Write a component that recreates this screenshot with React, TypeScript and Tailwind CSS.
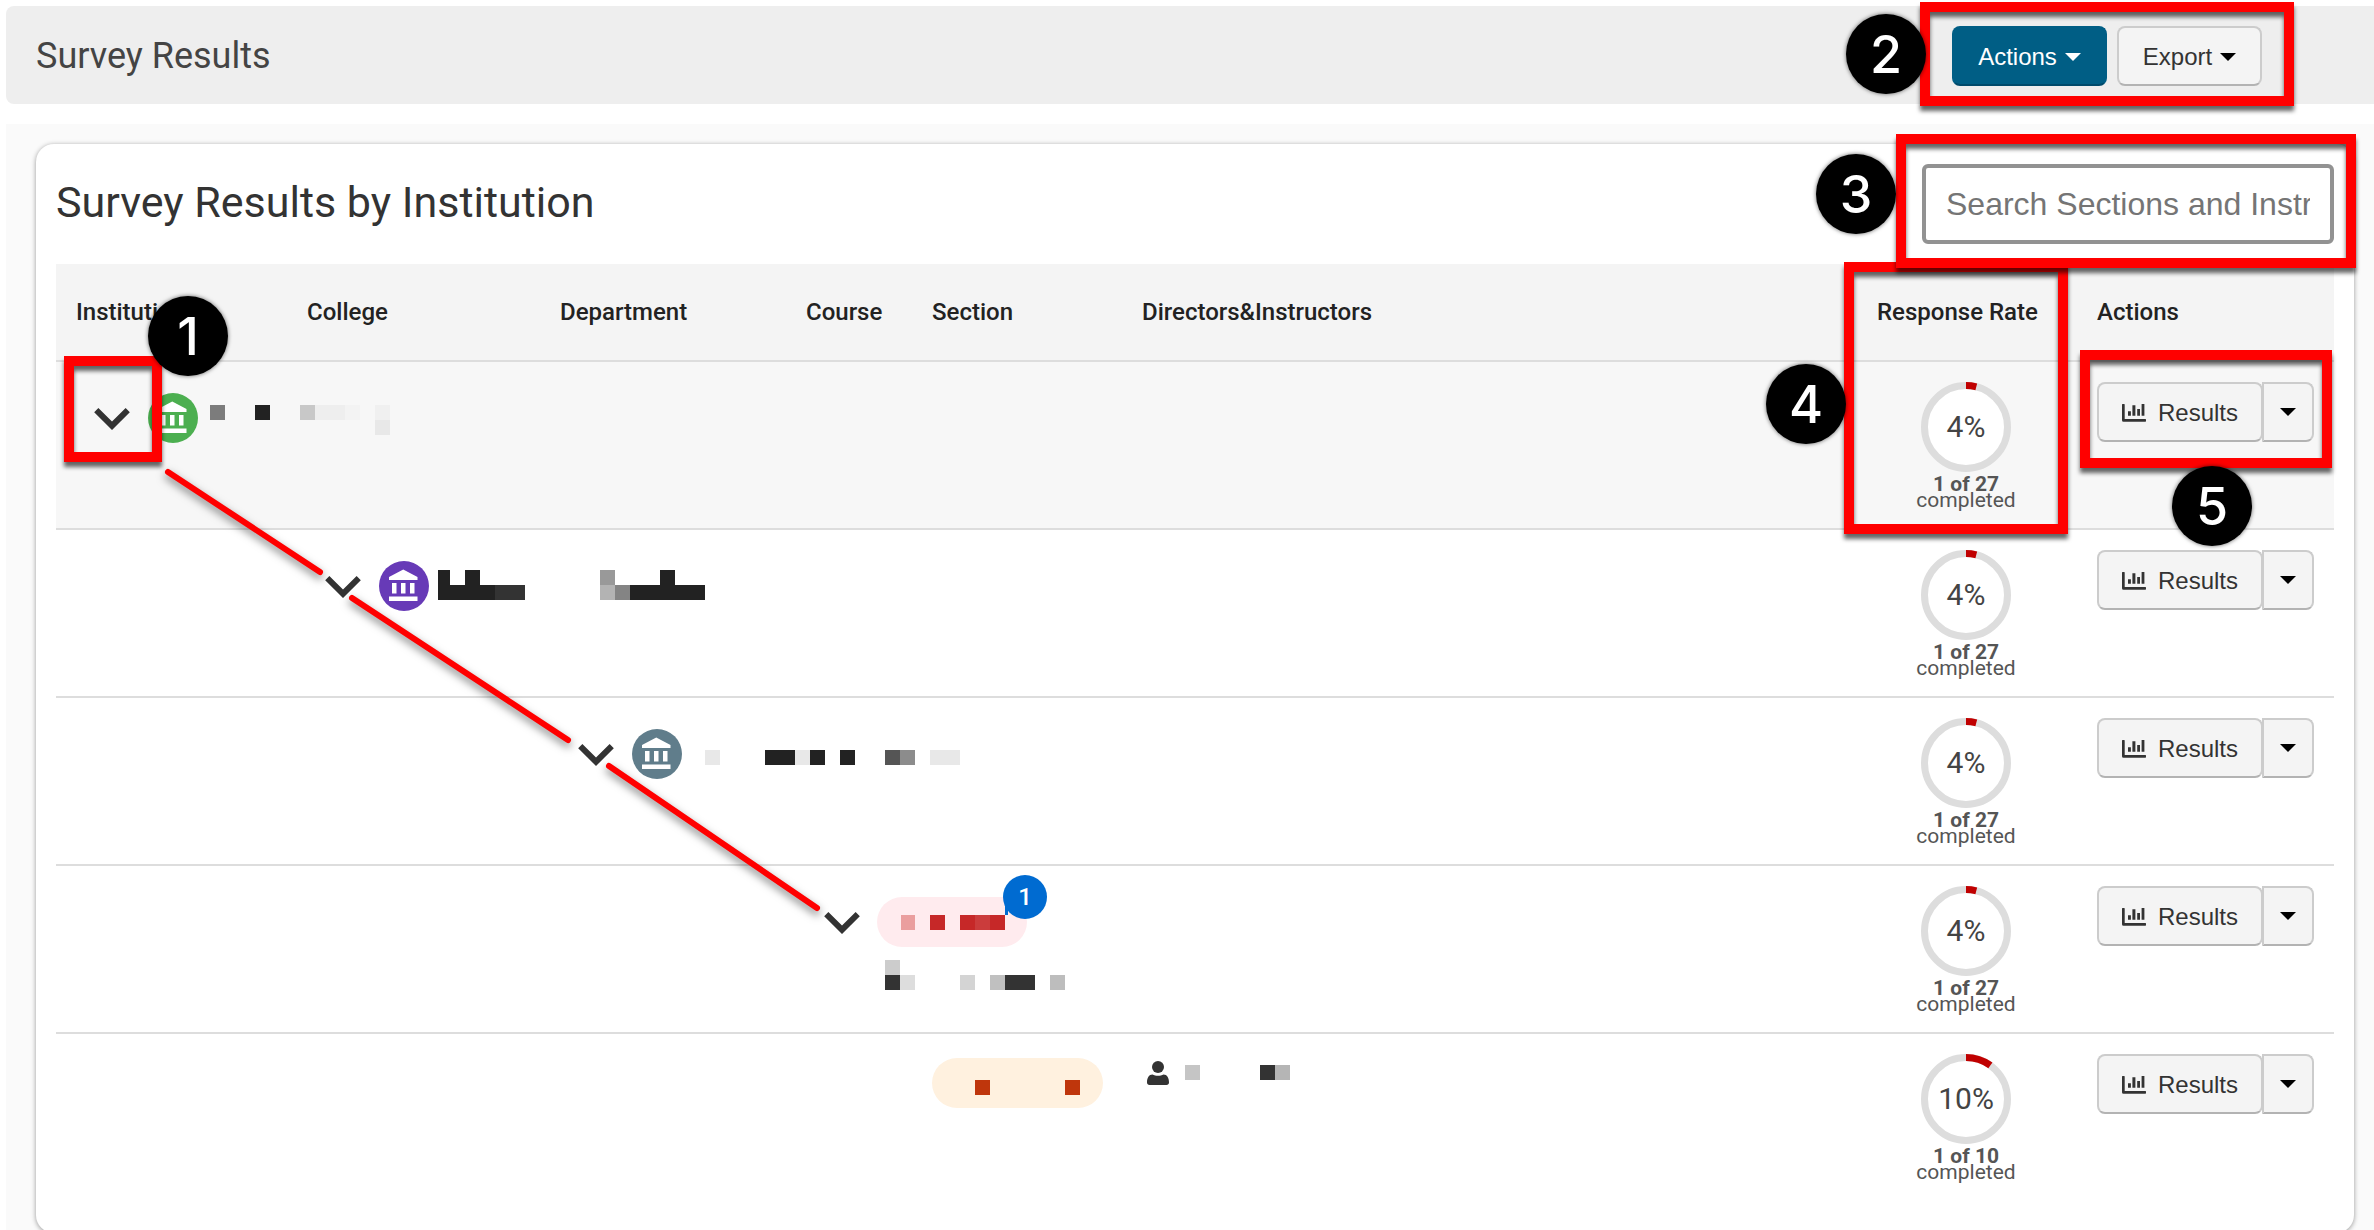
import type { ReactNode } from 'react';

type Block = [x: number, y: number, width: number, fill: string];

const Mosaic = ({ width, rows = 1, blocks }: { width: number; rows?: number; blocks: Block[] }) => (
  <svg width={width} height={rows * 15} viewBox={`0 0 ${width} ${rows * 15}`} shapeRendering="crispEdges" className="shrink-0" aria-hidden="true">
    {blocks.map(([x, y, w, fill]) => (
      <rect key={`${x}-${y}`} x={x} y={y} width={w} height={15} fill={fill} />
    ))}
  </svg>
);

const Caret = ({ className }: { className?: string }) => (
  <svg width="16" height="8" viewBox="0 0 16 8" className={className} aria-hidden="true">
    <path d="M0 0h16L8 8z" fill="currentColor" />
  </svg>
);

const ChartIcon = () => (
  <svg width="24" height="18" viewBox="0 0 24 18" fill="currentColor" aria-hidden="true">
    <path d="M0 .6Q0 0 .6 0h1.500Q2.700 0 2.700.6V15h20.700q.6 0 .6.6v1.500q0 .6-.6.6H1.500Q0 17.700 0 16.200zM6 7.300h2.900v4.400H6zM10.400 1.300h3v10.400h-3zM15.200 5h2.800v6.700h-2.800zM19.600 0h2.800v11.700h-2.800z" />
  </svg>
);

const BankIcon = () => (
  <svg width="36" height="36" viewBox="0 0 24 24" fill="white" aria-hidden="true">
    <path d="M4 10v7h3v-7H4zm6 0v7h3v-7h-3zM2 22h19v-3H2v3zm14-12v7h3v-7h-3zm-4.500-9L2 6v2h19V6l-9.500-5z" />
  </svg>
);

const PersonIcon = () => (
  <svg width="22" height="24" viewBox="0 0 22 24" fill="#333" className="shrink-0" aria-hidden="true">
    <circle cx="11" cy="6" r="6" />
    <path d="M5.500 13.500C2 13.500 0 17 0 21.500C0 23 1 24 2.500 24h17c1.500 0 2.500-1 2.500-2.500C22 17 20 13.500 16.500 13.500C13.500 15.200 8.500 15.200 5.500 13.500z" />
  </svg>
);

const Expand = ({ label }: { label: string }) => (
  <button type="button" aria-label={label} className="mt-[15px] shrink-0 self-start">
    <svg width="36" height="22" viewBox="6 8.59 12 7.41" fill="#333" className="block" aria-hidden="true">
      <path d="M7.41 8.59L12 13.17l4.590-4.580L18 10l-6 6-6-6z" />
    </svg>
  </button>
);

const Avatar = ({ className }: { className: string }) => (
  <span className={`flex size-[50px] shrink-0 items-center justify-center rounded-full ${className}`}>
    <BankIcon />
  </span>
);

const Outline = ({ className }: { className: string }) => (
  <span className={`pointer-events-none absolute border-[10px] border-[#ff0000] drop-shadow-[0_5px_2px_rgba(0,0,0,0.6)] ${className}`} />
);

const Step = ({ n, className }: { n: number; className: string }) => (
  <span
    className={`pointer-events-none absolute z-20 flex size-20 items-center justify-center rounded-full bg-black pt-0.5 font-[Inter,sans-serif] text-[52px] leading-none font-medium text-white shadow-[0_0_4px_rgba(0,0,0,0.6)] ${className}`}
  >
    {n}
  </span>
);

const Ring = ({ percent, done, total }: { percent: number; done: number; total: number }) => (
  <div className="flex flex-col items-center pr-0.5 text-[21px] leading-4 text-[#555]">
    <div className="relative flex size-[90px] items-center justify-center">
      <svg width="90" height="90" viewBox="0 0 90 90" className="absolute inset-0" aria-hidden="true">
        <circle cx="45" cy="45" r="41.500" fill="white" stroke="#ddd" strokeWidth="7" />
        <circle
          cx="45"
          cy="45"
          r="41.500"
          fill="none"
          stroke="#c00000"
          strokeWidth="7"
          pathLength="100"
          strokeDasharray={`${percent} 100`}
          transform="rotate(-90 45 45)"
        />
      </svg>
      <span className="relative text-[30px] leading-none text-[#444]">{percent}%</span>
    </div>
    <span className="mt-1 font-bold">{done} of {total}</span>
    <span>completed</span>
  </div>
);

const grayButton = 'border-2 border-[#ccc] border-b-[#b3b3b3] bg-[#f4f4f4] text-[#333]';

const ResultsButton = () => (
  <div className="flex h-15 font-['Liberation_Sans',Arial,sans-serif] text-2xl">
    <button type="button" className={`flex w-[166px] items-center justify-center gap-3 rounded-lg pt-0.5 ${grayButton}`}>
      <ChartIcon />
      Results
    </button>
    <button type="button" aria-label="More result options" className={`-ml-px flex w-[52px] items-center justify-center rounded-r-lg ${grayButton}`}>
      <Caret className="text-black" />
    </button>
  </div>
);

type Row = {
  id: string;
  percent: number;
  total: number;
  column: number;
  content: ReactNode;
  extra?: ReactNode;
};

const rows: Row[] = [
  {
    id: 'institution',
    percent: 4,
    total: 27,
    column: 0,
    content: (
      <div className="flex pl-[38px]">
        <Expand label="Collapse institution" />
        <Avatar className="ml-[18px] bg-[#4caf50]" />
        <div className="ml-3 pt-3">
          <Mosaic
            width={180}
            rows={2}
            blocks={[
              [0, 0, 15, '#7c7c7c'],
              [45, 0, 15, '#222'],
              [90, 0, 15, '#c8c8c8'],
              [105, 0, 30, '#eee'],
              [135, 0, 15, '#f3f3f3'],
              [165, 0, 15, '#f0f0f0'],
              [165, 15, 15, '#e8e8e8'],
            ]}
          />
        </div>
        <Outline className="top-[-37px] left-2 z-10 h-[106px] w-[98px]" />
        <Step n={1} className="top-[-97px] left-[92px]" />
      </div>
    ),
  },
  {
    id: 'college',
    percent: 4,
    total: 27,
    column: 1,
    content: (
      <div className="flex pl-[38px]">
        <Expand label="Collapse college" />
        <Avatar className="ml-[18px] bg-[#673ab7]" />
        <div className="ml-[9px] pt-[9px]">
          <Mosaic
            width={267}
            rows={2}
            blocks={[
              [0, 0, 12, '#222'],
              [27, 0, 15, '#222'],
              [0, 15, 57, '#222'],
              [57, 15, 30, '#333'],
              [162, 0, 15, '#999'],
              [222, 0, 15, '#222'],
              [162, 15, 15, '#b3b3b3'],
              [177, 15, 15, '#848484'],
              [192, 15, 75, '#222'],
            ]}
          />
        </div>
      </div>
    ),
  },
  {
    id: 'department',
    percent: 4,
    total: 27,
    column: 2,
    content: (
      <div className="flex pl-[38px]">
        <Expand label="Collapse department" />
        <Avatar className="ml-[18px] bg-[#607d8b]" />
        <div className="ml-[23px] pt-[21px]">
          <Mosaic
            width={255}
            blocks={[
              [0, 0, 15, '#e8e8e8'],
              [60, 0, 30, '#222'],
              [90, 0, 15, '#e8e8e8'],
              [105, 0, 15, '#222'],
              [135, 0, 15, '#222'],
              [180, 0, 15, '#555'],
              [195, 0, 15, '#8c8c8c'],
              [225, 0, 30, '#e8e8e8'],
            ]}
          />
        </div>
      </div>
    ),
  },
  {
    id: 'course',
    percent: 4,
    total: 27,
    column: 3,
    content: (
      <div className="flex pl-[38px]">
        <Expand label="Collapse course" />
        <div className="ml-[17px]">
          <div className="relative h-[50px] w-[150px] rounded-full bg-[#ffebee] pt-[18px] pl-6">
            <Mosaic
              width={105}
              blocks={[
                [0, 0, 14, '#ea9e9e'],
                [29, 0, 15, '#c62828'],
                [59, 0, 15, '#c62828'],
                [74, 0, 15, '#cb3c3c'],
                [89, 0, 15, '#c62828'],
              ]}
            />
            <span className="absolute top-2 left-32 h-[10px] w-[3px] bg-[#006bd1]" />
            <span className="absolute top-[-22px] left-[126px] flex size-11 items-center justify-center rounded-full bg-[#006bd1] text-2xl leading-none font-medium text-white">
              1
            </span>
          </div>
          <div className="mt-[13px] ml-2">
            <Mosaic
              width={180}
              rows={2}
              blocks={[
                [0, 0, 15, '#ccc'],
                [0, 15, 15, '#333'],
                [15, 15, 15, '#ddd'],
                [75, 15, 15, '#d4d4d4'],
                [105, 15, 15, '#c0c0c0'],
                [120, 15, 30, '#333'],
                [165, 15, 15, '#bdbdbd'],
              ]}
            />
          </div>
        </div>
      </div>
    ),
  },
  {
    id: 'section',
    percent: 10,
    total: 10,
    column: 4,
    content: (
      <div className="-mt-[7px] ml-5 h-[50px] w-[171px] rounded-full bg-[#fff1df] pt-[22px] pl-[43px]">
        <Mosaic
          width={105}
          blocks={[
            [0, 0, 15, '#bf360c'],
            [90, 0, 15, '#bf360c'],
          ]}
        />
      </div>
    ),
    extra: (
      <div className="-mt-1 ml-[25px] flex items-center">
        <PersonIcon />
        <div className="ml-4 pb-0.5">
          <Mosaic
            width={105}
            blocks={[
              [0, 0, 15, '#c5c5c5'],
              [75, 0, 15, '#333'],
              [90, 0, 15, '#b5b5b5'],
            ]}
          />
        </div>
      </div>
    ),
  },
];

const columns = [
  { name: 'Institution', width: 'w-[231px]' },
  { name: 'College', width: 'w-[253px]' },
  { name: 'Department', width: 'w-[246px]' },
  { name: 'Course', width: 'w-[126px]' },
  { name: 'Section', width: 'w-[210px]' },
  { name: 'Directors&Instructors', width: 'w-auto' },
  { name: 'Response Rate', width: 'w-[220px]' },
  { name: 'Actions', width: 'w-[257px]' },
];

const ResultsTable = () => (
  <div className="relative mt-5">
    <table className="w-full table-fixed border-separate border-spacing-0">
      <colgroup>
        {columns.map((column) => (
          <col key={column.name} className={column.width} />
        ))}
      </colgroup>
      <thead>
        <tr>
          {columns.map((column) => (
            <th
              key={column.name}
              scope="col"
              className="relative h-[98px] border-b-2 border-[#ddd] bg-[#f4f4f4] px-5 text-left text-2xl font-medium whitespace-nowrap text-[#222]"
            >
              {column.name}
              {column.name === 'Response Rate' && (
                <>
                  <Outline className="top-[-2px] left-[-13px] z-10 h-[272px] w-[224px]" />
                  <Step n={4} className="top-[100px] left-[-91px]" />
                </>
              )}
            </th>
          ))}
        </tr>
      </thead>
      <tbody>
        {rows.map((row, i) => {
          const cell = `h-[168px] align-top border-[#ddd] ${i < rows.length - 1 ? 'border-b-2' : ''}`;
          return (
            <tr key={row.id} className={i === 0 ? 'bg-[#f7f7f7]' : ''}>
              {columns.slice(0, 6).map((column, c) => (
                <td key={column.name} className={`${cell} pt-[31px]`}>
                  {c === row.column && <div className="relative w-max">{row.content}</div>}
                  {c === 5 && row.extra}
                </td>
              ))}
              <td className={`${cell} pt-5`}>
                <Ring percent={row.percent} done={1} total={row.total} />
              </td>
              <td className={`${cell} relative pt-5 pl-5`}>
                <ResultsButton />
                {i === 0 && (
                  <>
                    <Outline className="top-[-12px] left-[3px] z-10 h-[118px] w-[252px]" />
                    <Step n={5} className="top-[104px] left-[95px]" />
                  </>
                )}
              </td>
            </tr>
          );
        })}
      </tbody>
    </table>

    {/* connectors between the expanded levels */}
    <svg
      width="800"
      height="680"
      viewBox="0 0 800 680"
      className="pointer-events-none absolute top-0 left-0 z-10 drop-shadow-[0_4px_4px_rgba(0,0,0,0.5)]"
      fill="none"
      stroke="#ff0000"
      strokeWidth="6"
      strokeLinecap="round"
      aria-hidden="true"
    >
      <path d="M112 208L264 308M296 334L512 476M553 502L761 644" />
    </svg>
  </div>
);

const App = () => {
  return (
    <div className="min-h-screen bg-white pt-1.5 pl-1.5 font-[Roboto,sans-serif]">
      <header className="flex h-[98px] items-center justify-between rounded-l-lg bg-[#eee] pt-0.5 pr-28 pl-[30px]">
        <h1 className="text-4xl text-[#444]">Survey Results</h1>
        <div className="relative flex gap-[10px] font-['Liberation_Sans',Arial,sans-serif] text-2xl">
          <button
            type="button"
            className="flex h-15 w-[155px] items-center justify-center gap-2 rounded-lg border-2 border-[#005e85] border-b-[#004a6b] bg-[#005e85] pt-0.5 text-white"
          >
            Actions
            <Caret />
          </button>
          <button type="button" className={`flex h-15 w-[145px] items-center justify-center gap-2 rounded-lg pt-0.5 ${grayButton}`}>
            Export
            <Caret className="text-black" />
          </button>
          <Outline className="-top-6 -right-8 z-10 h-[104px] w-[374px]" />
          <Step n={2} className="top-[-12px] -left-[106px]" />
        </div>
      </header>

      <main className="mt-5 bg-[#fafafa] pt-5 pr-5 pl-[30px]">
        <section className="rounded-[18px] bg-white px-5 pt-5 pb-[31px] shadow-[0_1px_5px_rgba(0,0,0,0.4)]">
          <div className="flex items-center justify-between">
            <h2 className="pb-1 text-[43px] leading-none text-[#333]">Survey Results by Institution</h2>
            <div className="relative">
              <input
                type="text"
                aria-label="Search Sections and Instructors"
                placeholder="Search Sections and Instructors"
                className="block h-20 w-[412px] rounded-md border-4 border-[#929292] bg-white px-5 font-['Liberation_Sans',Arial,sans-serif] text-[32px] placeholder:text-[#757575]"
              />
              <Outline className="-top-[30px] -left-[26px] z-20 h-[134px] w-[460px]" />
              <Step n={3} className="top-[-10px] -left-[106px]" />
            </div>
          </div>
          <ResultsTable />
        </section>
      </main>
    </div>
  );
};

export default App;
